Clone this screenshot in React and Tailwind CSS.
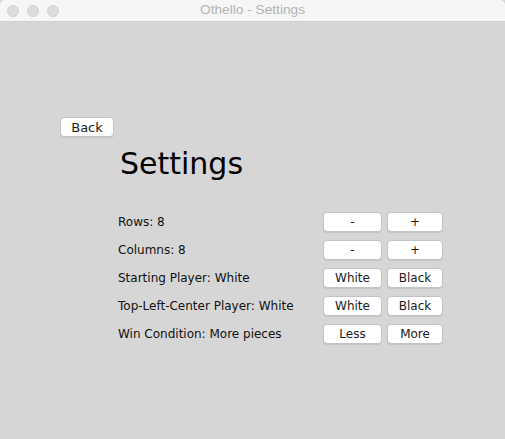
import React from 'react';

const rows = [
    { label: 'Rows: 8', a: '-', b: '+' },
    { label: 'Columns: 8', a: '-', b: '+' },
    { label: 'Starting Player: White', a: 'White', b: 'Black' },
    { label: 'Top-Left-Center Player: White', a: 'White', b: 'Black' },
    { label: 'Win Condition: More pieces', a: 'Less', b: 'More' },
];

const Btn = ({ children, className = '' }) => (
    <button className={`h-[20px] bg-white border border-[#c3c3c3] rounded-[4px] shadow-[0_1px_0_rgba(0,0,0,0.08)] text-[12px] text-[#1a1a1a] leading-none flex items-center justify-center ${className}`}>
        {children}
    </button>
);

const App = () => {
    return (
        <div className="w-[505px] h-[439px] flex flex-col bg-[#d6d6d6] overflow-hidden" style={{ fontFamily: '"DejaVu Sans", sans-serif' }}>
            {/* title bar */}
            <div className="h-[22px] shrink-0 relative flex items-center justify-center bg-[#f6f6f6] border-b border-[#d0d0d0] rounded-t-[5px]">
                <div className="absolute left-[7px] top-[5px] flex gap-[8px]">
                    <span className="w-[12px] h-[12px] rounded-full bg-[#dcdcdc] border border-[#d2d2d2]"></span>
                    <span className="w-[12px] h-[12px] rounded-full bg-[#dcdcdc] border border-[#d2d2d2]"></span>
                    <span className="w-[12px] h-[12px] rounded-full bg-[#dcdcdc] border border-[#d2d2d2]"></span>
                </div>
                <span className="text-[13.7px] text-[#b4b4b4]" style={{ fontFamily: '"Liberation Sans", sans-serif' }}>Othello - Settings</span>
            </div>

            <div className="flex-1 pl-[60px] pt-[95px]">
                <Btn className="w-[54px] text-[13px]">Back</Btn>
                <div className="ml-[58px] mt-[9px] w-[325px]">
                    <h1 className="text-[30px] text-black ml-[2px] leading-[35px]">Settings</h1>
                    <div className="mt-[31px] flex flex-col gap-[8px]">
                        {rows.map(r => (
                            <div key={r.label} className="flex items-center h-[20px]">
                                <span className="flex-1 text-[12px] text-[#111]">{r.label}</span>
                                <Btn className="w-[59px]">{r.a}</Btn>
                                <Btn className="w-[56px] ml-[5px]">{r.b}</Btn>
                            </div>
                        ))}
                    </div>
                </div>
            </div>
        </div>
    );
};

export default App;
